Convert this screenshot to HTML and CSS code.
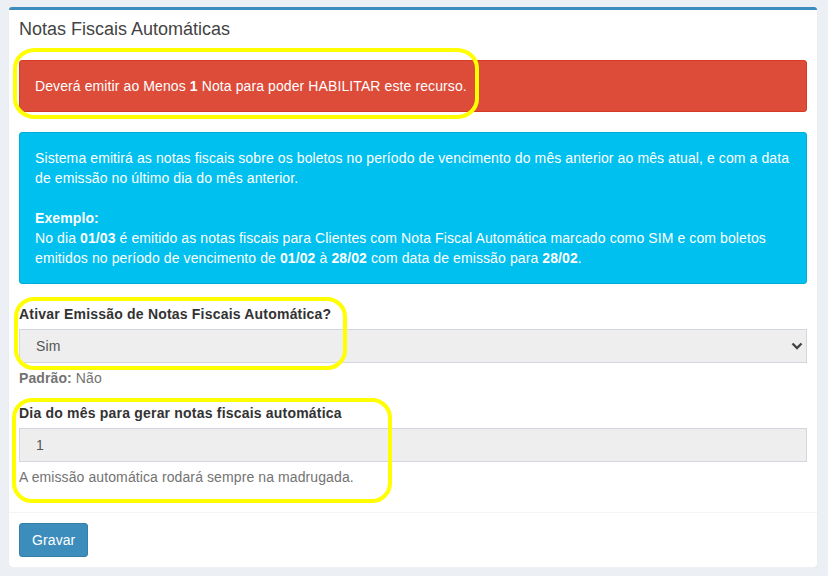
FILE: index.html
```html
<!DOCTYPE html>
<html lang="pt-BR">
<head>
<meta charset="utf-8">
<title>Notas Fiscais Automáticas</title>
<link rel="stylesheet" href="styles.css">
</head>
<body>
<div class="page">
  <div class="box">
    <div class="box-header">
      <h3 class="box-title">Notas Fiscais Automáticas</h3>
    </div>
    <div class="box-body">
      <div class="alert alert-danger">Deverá emitir ao Menos <b>1</b> Nota para poder HABILITAR este recurso.</div>
      <div class="alert alert-info">Sistema emitirá as notas fiscais sobre os boletos no período de vencimento do mês anterior ao mês atual, e com a data de emissão no último dia do mês anterior.<br><br><b>Exemplo:</b><br>No dia <b>01/03</b> é emitido as notas fiscais para Clientes com Nota Fiscal Automática marcado como SIM e com boletos emitidos no período de vencimento de <b>01/02</b> à <b>28/02</b> com data de emissão para <b>28/02</b>.</div>
      <div class="form-group">
        <label class="label">Ativar Emissão de Notas Fiscais Automática?</label>
        <div class="select-wrap">
          <select class="form-control select">
            <option>Sim</option>
            <option>Não</option>
          </select>
          <svg class="chevron" width="12" height="8" viewBox="0 0 12 8"><path d="M1.5 1.5 L6 6 L10.5 1.5" fill="none" stroke="#444" stroke-width="2.4"/></svg>
        </div>
        <p class="help-block"><b>Padrão:</b> Não</p>
      </div>
      <div class="form-group">
        <label class="label">Dia do mês para gerar notas fiscais automática</label>
        <input class="form-control" type="text" value="1">
        <p class="help-block">A emissão automática rodará sempre na madrugada.</p>
      </div>
    </div>
    <div class="box-footer">
      <button class="btn" type="button">Gravar</button>
    </div>
    <div class="mark mark-1"></div>
    <div class="mark mark-2"></div>
    <div class="mark mark-3"></div>
  </div>
</div>
</body>
</html>
```
FILE: styles.css
```css
html, body {
  margin: 0;
  padding: 0;
  background: #ecf0f5;
  font-family: "Liberation Sans", Arial, sans-serif;
  font-size: 14px;
  line-height: 20px;
  color: #333;
  letter-spacing: 0.1px;
}
.page {
  padding: 7px 11px 0 9px;
}
.box {
  position: relative;
  background: #fff;
  border-top: 3px solid #3c8dbc;
  border-radius: 3px;
  box-shadow: 0 1px 1px rgba(0,0,0,0.1);
}
.box-header {
  padding: 10px;
}
.box-title {
  margin: 0;
  font-size: 18px;
  line-height: 18px;
  font-weight: normal;
  color: #444;
  letter-spacing: 0;
}
.box-body {
  padding: 12px 10px 10px;
}
.alert {
  border-radius: 3px;
  padding: 15px;
  margin-bottom: 20px;
  color: #fff;
  border: 1px solid transparent;
}
.alert-danger {
  background: #dd4b39;
  border-color: #d73925;
}
.alert-info {
  background: #00c0ef;
  border-color: #00acd6;
}
.form-group {
  margin-bottom: 15px;
}
.label {
  display: block;
  font-weight: bold;
  margin-bottom: 5px;
  letter-spacing: 0.2px;
}
.select-wrap {
  position: relative;
}
.form-control {
  display: block;
  box-sizing: border-box;
  width: 100%;
  height: 34px;
  padding: 6px 16px;
  margin: 0;
  font-family: inherit;
  font-size: 14px;
  letter-spacing: 0.1px;
  color: #555;
  background: #eee;
  border: 1px solid #d2d6de;
  border-radius: 0;
  outline: none;
}
.select {
  appearance: none;
  -webkit-appearance: none;
}
.chevron {
  position: absolute;
  right: 4px;
  top: 13px;
}
.help-block {
  margin: 5px 0 10px;
  color: #737373;
}
.box-footer {
  border-top: 1px solid #f4f4f4;
  padding: 10px;
}
.btn {
  font-family: inherit;
  font-size: 14px;
  line-height: 20px;
  letter-spacing: 0.1px;
  padding: 6px 12px;
  color: #fff;
  background: #3c8dbc;
  border: 1px solid #367fa9;
  border-radius: 3px;
}
.mark {
  position: absolute;
  border: 4px solid #ffff00;
  pointer-events: none;
}
.mark-1 {
  left: 4px;
  top: 38px;
  width: 458px;
  height: 63px;
  border-radius: 22px / 20px;
}
.mark-2 {
  left: 5px;
  top: 287px;
  width: 325px;
  height: 65px;
  border-radius: 20px;
}
.mark-3 {
  left: 3px;
  top: 388px;
  width: 372px;
  height: 97px;
  border-radius: 20px;
}
```
